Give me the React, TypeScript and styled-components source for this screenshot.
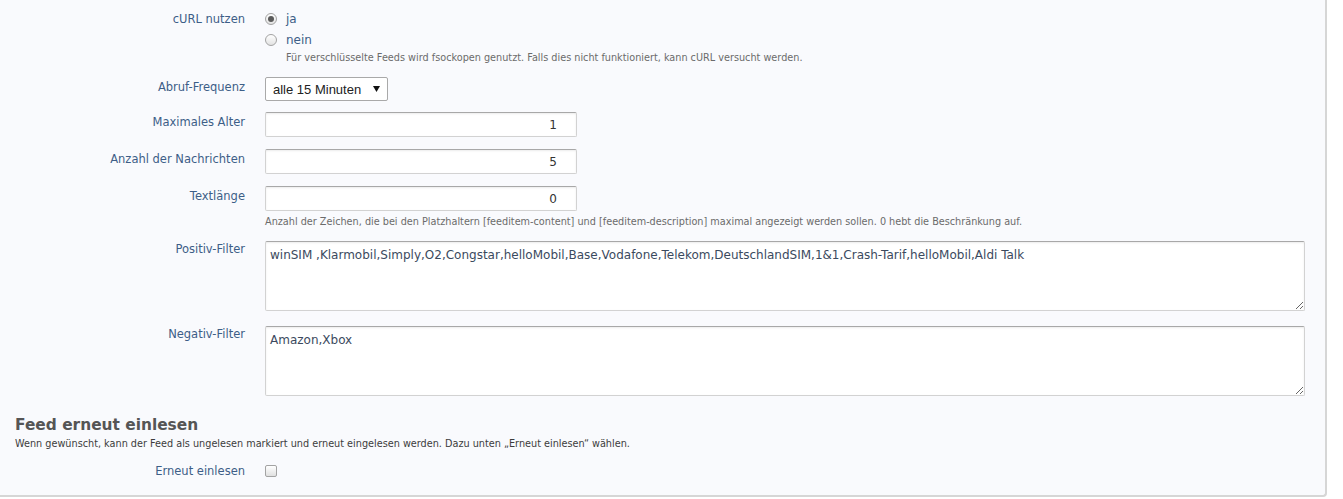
import React from 'react';
import styled, { createGlobalStyle } from 'styled-components';

const GlobalStyle = createGlobalStyle`
  html, body {
    margin: 0;
    padding: 0;
    background: #ffffff;
  }
  body {
    font-family: 'DejaVu Sans', Verdana, sans-serif;
  }
`;

const Panel = styled.div`
  width: 1325px;
  height: 487px;
  background: #f9fafd;
  border-right: 2px solid #d6d6d6;
  border-bottom: 2px solid #d6d6d6;
  border-bottom-right-radius: 4px;
  box-sizing: content-box;
  padding-top: 8px;
`;

const Form = styled.div`
  display: flex;
  flex-direction: column;
`;

const Row = styled.div<{ $gap?: number }>`
  display: grid;
  grid-template-columns: 245px 1fr;
  column-gap: 20px;
  margin-bottom: ${(p) => p.$gap ?? 11}px;
`;

const Label = styled.div<{ $pad?: number }>`
  text-align: right;
  font-size: 11.5px;
  line-height: 14px;
  color: #3d5e87;
  padding-top: ${(p) => p.$pad ?? 3}px;
  white-space: nowrap;
`;

const Field = styled.div`
  display: flex;
  flex-direction: column;
  align-items: flex-start;
`;

const RadioLine = styled.label`
  display: flex;
  align-items: center;
  height: 21px;
  font-size: 12px;
  color: #3d5e87;
  gap: 9px;
`;

const Radio = styled.input.attrs({ type: 'radio' })`
  appearance: none;
  margin: 0;
  width: 12px;
  height: 12px;
  border-radius: 50%;
  border: 1px solid #a3a3a3;
  background: linear-gradient(#ffffff, #e2e2e2);
  box-sizing: border-box;
  position: relative;

  &:checked::after {
    content: '';
    position: absolute;
    left: 2px;
    top: 2px;
    width: 6px;
    height: 6px;
    border-radius: 50%;
    background: #5a5a5a;
  }
`;

const Help = styled.div<{ $indent?: number }>`
  font-size: 9.7px;
  line-height: 16px;
  color: #6b6b6b;
  padding-left: ${(p) => p.$indent ?? 0}px;
  white-space: nowrap;
`;

const Select = styled.select`
  appearance: none;
  width: 123px;
  height: 24px;
  padding: 0 0 0 7px;
  font-family: 'Liberation Sans', Arial, sans-serif;
  font-size: 13px;
  color: #222;
  border: 1px solid #a9a9a9;
  border-radius: 2px;
  background: #ffffff
    url("data:image/svg+xml,%3Csvg xmlns='http://www.w3.org/2000/svg' width='7' height='6'%3E%3Cpath d='M0 0h7L3.5 6z' fill='%23111'/%3E%3C/svg%3E")
    no-repeat right 7px center;
`;

const NumberInput = styled.input`
  width: 312px;
  height: 25px;
  box-sizing: border-box;
  margin: 0;
  padding: 0 19px 0 4px;
  text-align: right;
  font-family: 'DejaVu Sans', Verdana, sans-serif;
  font-size: 12px;
  color: #333;
  background: #ffffff;
  border: 1px solid #d2d2d2;
  border-top-color: #a8a8a8;
  border-radius: 2px;
  box-shadow: inset 0 1px 2px rgba(0, 0, 0, 0.08);
  outline: none;
`;

const TextArea = styled.textarea`
  width: 1040px;
  height: 70px;
  box-sizing: border-box;
  margin: 0;
  padding: 6px 4px 4px;
  font-family: 'DejaVu Sans', Verdana, sans-serif;
  font-size: 12px;
  line-height: 15px;
  color: #3b4a5e;
  background: #ffffff;
  border: 1px solid #d2d2d2;
  border-top-color: #a8a8a8;
  border-radius: 2px;
  box-shadow: inset 0 1px 2px rgba(0, 0, 0, 0.08);
  outline: none;
  display: block;
`;

const Section = styled.div`
  padding: 19px 15px 0;
`;

const Heading = styled.h3`
  margin: 0;
  font-size: 15.4px;
  line-height: 20px;
  font-weight: bold;
  color: #555555;
`;

const Intro = styled.p`
  margin: 2px 0 0;
  font-size: 9.7px;
  line-height: 14px;
  color: #3c3c3c;
`;

const CheckRow = styled(Row)`
  margin: 13px 0 0 -15px;
  align-items: center;
`;

const Checkbox = styled.input.attrs({ type: 'checkbox' })`
  appearance: none;
  margin: 0;
  width: 12px;
  height: 12px;
  border: 1px solid #a3a3a3;
  border-radius: 2px;
  background: linear-gradient(#ffffff, #e0e0e0);
  box-sizing: border-box;
`;

const positiveFilter =
  'winSIM ,Klarmobil,Simply,O2,Congstar,helloMobil,Base,Vodafone,Telekom,DeutschlandSIM,1&1,Crash-Tarif,helloMobil,Aldi Talk';

export default function App() {
  return (
    <>
      <GlobalStyle />
      <Panel>
        <Form>
          <Row>
            <Label $pad={4}>cURL nutzen</Label>
            <Field>
              <RadioLine>
                <Radio name="curl" defaultChecked />
                ja
              </RadioLine>
              <RadioLine>
                <Radio name="curl" />
                nein
              </RadioLine>
              <Help $indent={21}>
                Für verschlüsselte Feeds wird fsockopen genutzt. Falls dies nicht funktioniert, kann cURL
                versucht werden.
              </Help>
            </Field>
          </Row>
          <Row>
            <Label>Abruf-Frequenz</Label>
            <Field>
              <Select defaultValue="15">
                <option value="15">alle 15 Minuten</option>
                <option value="30">alle 30 Minuten</option>
                <option value="60">jede Stunde</option>
              </Select>
            </Field>
          </Row>
          <Row $gap={12}>
            <Label>Maximales Alter</Label>
            <Field>
              <NumberInput defaultValue="1" />
            </Field>
          </Row>
          <Row $gap={12}>
            <Label>Anzahl der Nachrichten</Label>
            <Field>
              <NumberInput defaultValue="5" />
            </Field>
          </Row>
          <Row>
            <Label>Textlänge</Label>
            <Field>
              <NumberInput defaultValue="0" />
              <Help style={{ marginTop: 3 }}>
                Anzahl der Zeichen, die bei den Platzhaltern [feeditem-content] und
                [feeditem-description] maximal angezeigt werden sollen. 0 hebt die Beschränkung auf.
              </Help>
            </Field>
          </Row>
          <Row $gap={15}>
            <Label $pad={1}>Positiv-Filter</Label>
            <Field>
              <TextArea defaultValue={positiveFilter} />
            </Field>
          </Row>
          <Row $gap={0}>
            <Label $pad={1}>Negativ-Filter</Label>
            <Field>
              <TextArea defaultValue="Amazon,Xbox" />
            </Field>
          </Row>
        </Form>
        <Section>
          <Heading>Feed erneut einlesen</Heading>
          <Intro>
            Wenn gewünscht, kann der Feed als ungelesen markiert und erneut eingelesen werden. Dazu
            unten „Erneut einlesen“ wählen.
          </Intro>
          <CheckRow>
            <Label $pad={0}>Erneut einlesen</Label>
            <Field>
              <Checkbox />
            </Field>
          </CheckRow>
        </Section>
      </Panel>
    </>
  );
}
